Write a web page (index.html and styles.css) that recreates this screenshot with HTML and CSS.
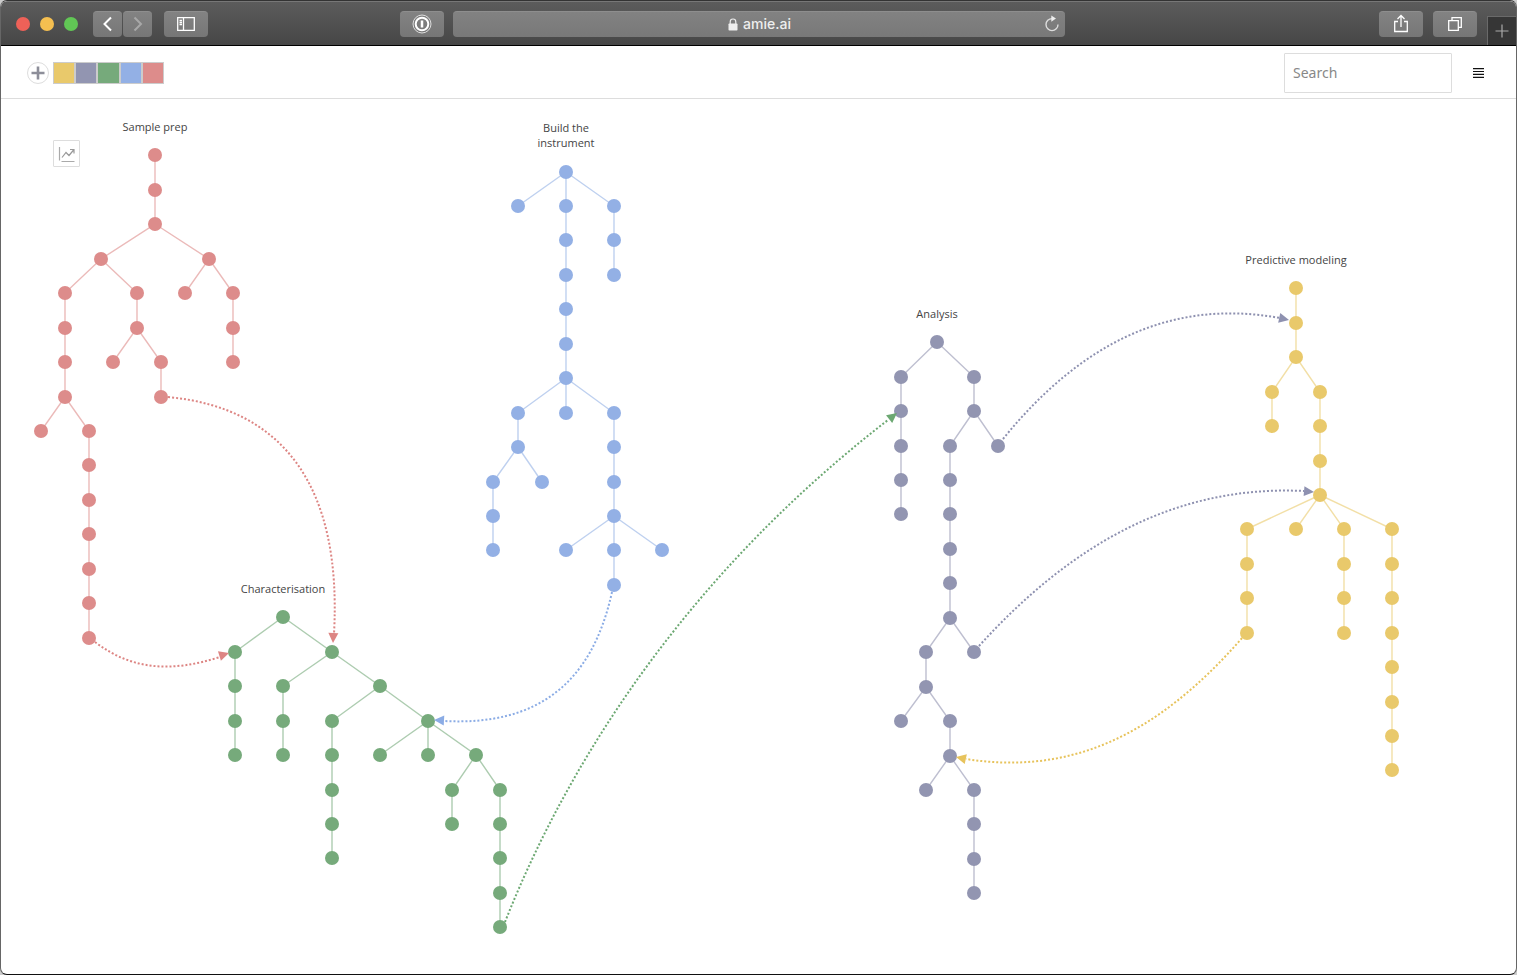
FILE: index.html
```html
<!DOCTYPE html>
<html lang="en">
<head>
<meta charset="utf-8">
<meta name="viewport" content="width=device-width, initial-scale=1">
<title>amie.ai</title>
<link rel="stylesheet" href="styles.css">
</head>
<body>
<div class="window">
  <header class="chrome">
    <div class="chrome-left">
      <div class="lights">
        <button class="light red" aria-label="Close"></button>
        <button class="light amber" aria-label="Minimise"></button>
        <button class="light green" aria-label="Zoom"></button>
      </div>
      <div class="history">
        <button class="tool narrow" aria-label="Back"><svg width="30" height="26" fill="none" stroke="#fff" stroke-width="2"><path d="M18 6.500L11.500 13l6.500 6.500"/></svg></button>
        <button class="tool narrow" aria-label="Forward"><svg width="30" height="26" fill="none" stroke="#a8a8a8" stroke-width="2"><path d="M11.500 6.500L18 13l-6.500 6.500"/></svg></button>
      </div>
      <button class="tool" aria-label="Sidebar"><svg width="44" height="26" fill="none" stroke="#fff" stroke-width="1.300"><path d="M13.700 6.700h16.600v12.600H13.700zM19.500 6.700v12.600M15.500 9.500h2.500M15.500 11.500h2.500M15.500 13.500h2.500"/></svg></button>
      <button class="tool password" aria-label="Password manager"><svg width="44" height="26" fill="none"><circle cx="22" cy="13" r="9" stroke="#ddd" stroke-width="1"/><circle cx="22" cy="13" r="6.300" stroke="#fff" stroke-width="2"/><path d="M22 9.500v7" stroke="#fff" stroke-width="2.500"/></svg></button>
    </div>
    <div class="address">
      <a class="site" href="#"><svg width="10" height="13" viewBox="0 0 10 13"><path d="M2.200 6V3.800a2.800 2.800 0 0 1 5.600 0V6" fill="none" stroke="#eee" stroke-width="1.200"/><rect x="0.500" y="5.500" width="9" height="7" rx="0.800" fill="#eee"/></svg>amie.ai</a>
      <button class="reload" aria-label="Reload"><svg width="16" height="18" viewBox="0 0 16 18"><path d="M8 3.600A6 6 0 1 0 14 9.600" fill="none" stroke="#ddd" stroke-width="1.400"/><path d="M7.300 0.500v6.200L12 3.600z" fill="#eee"/></svg></button>
    </div>
    <div class="chrome-right">
      <button class="tool" aria-label="Share"><svg width="44" height="26" fill="none" stroke="#fff" stroke-width="1.300"><path d="M19 10.500h-3.300v10h12.600v-10H25M22 16V4.500M18.500 8L22 4.500 25.500 8"/></svg></button>
      <button class="tool" aria-label="Show tabs"><svg width="44" height="26" fill="none" stroke="#fff" stroke-width="1.300"><path d="M15.700 9.700h9.600v9.600h-9.600zM19 9.500V6.700h9.300v9.600h-2.800"/></svg></button>
      <button class="new-tab" aria-label="New tab"><svg width="14" height="14" stroke="#aaa" stroke-width="1.200"><path d="M7 0.500v13M0.500 7h13"/></svg></button>
    </div>
  </header>
  <div class="app-bar">
    <button class="add" aria-label="Add tree"><svg width="14" height="14" stroke="#8d8e99" stroke-width="2.600"><path d="M7 0.500v13M0.500 7h13"/></svg></button>
    <div class="swatches">
      <button class="swatch yellow" aria-label="Yellow"></button>
      <button class="swatch purple" aria-label="Purple"></button>
      <button class="swatch green" aria-label="Green"></button>
      <button class="swatch blue" aria-label="Blue"></button>
      <button class="swatch rose" aria-label="Rose"></button>
    </div>
    <input class="search" type="search" placeholder="Search" aria-label="Search">
    <button class="menu" aria-label="Menu"><svg width="11" height="10" fill="#111"><path d="M0 0h11v1.200H0zM0 2.900h11v1.200H0zM0 5.800h11V7H0zM0 8.700h11v1.200H0z"/></svg></button>
  </div>
  <main class="canvas">
    <svg class="graph" id="graph" viewBox="1 99 1515 870" preserveAspectRatio="xMinYMin meet" role="img" aria-label="Project trees"></svg>
    <button class="chart" aria-label="Chart"><svg width="18" height="18" fill="none" stroke="#999" stroke-width="1.200"><path d="M1.500 2v13.500M3.500 16.500h13" stroke="#aaa"/><path d="M4 12.500l4-5 3 3 5-6M12 4.500h4v4"/></svg></button>
  </main>
</div>
<script src="graph.js"></script>
</body>
</html>
```
FILE: styles.css
```css
* { box-sizing: border-box; }

body {
  margin: 0;
  background: #ccc;
  font-family: "Open Sans", "Noto Sans", sans-serif;
}

button {
  margin: 0;
  padding: 0;
  border: 0;
  background: none;
  display: flex;
  align-items: center;
  justify-content: center;
  flex-shrink: 0;
}

svg { display: block; }

.window {
  display: flex;
  flex-direction: column;
  height: 100vh;
  overflow: hidden;
  border-radius: 7px;
  background: #fff;
  border: 1px solid #666;
  border-top-color: #333;
  border-bottom-color: #111;
}

.chrome {
  display: grid;
  grid-template-columns: 1fr minmax(200px, 612px) 1fr;
  align-items: center;
  height: 45px;
  flex-shrink: 0;
  background: linear-gradient(#5c5c5c, #464646);
  border-top: 1px solid #777;
  border-bottom: 1px solid #000;
}

.chrome-left,
.chrome-right {
  display: flex;
  align-items: center;
  gap: 10px;
}

.chrome-left { padding: 0 9px 0 15px; gap: 12px; }
.chrome-right { justify-content: flex-end; align-self: stretch; }

.lights { display: flex; gap: 10px; margin-right: 3px; }
.light { width: 14px; height: 14px; border-radius: 50%; }
.light.red { background: #ee6158; }
.light.amber { background: #f5bf50; }
.light.green { background: #61c755; }

.history { display: flex; gap: 1px; }

.tool {
  width: 44px;
  height: 26px;
  border-radius: 4px;
  background: linear-gradient(#838383, #767676);
  border-top: 1px solid #8e8e8e;
}

.tool.narrow { width: 29px; }
.password { margin-left: auto; }

.address {
  display: flex;
  align-items: center;
  height: 26px;
  padding: 0 5px 0 23px;
  border-radius: 4px;
  background: linear-gradient(#828282, #787878);
  border-top: 1px solid #8e8e8e;
}

.site {
  flex: 1;
  display: flex;
  align-items: center;
  justify-content: center;
  gap: 5px;
  color: #eee;
  font: 500 14px/18px Inter, sans-serif;
  text-decoration: none;
}

.new-tab {
  width: 29px;
  align-self: flex-end;
  height: 29px;
  background: #363636;
  border-top: 1px solid #6a6a6a;
  border-left: 1px solid #6a6a6a;
}

.app-bar {
  display: flex;
  align-items: center;
  flex-shrink: 0;
  height: 53px;
  padding: 1px 32px 0 26px;
  border-bottom: 1px solid #ddd;
}

.add {
  width: 22px;
  height: 22px;
  border: 1px solid #ddd;
  border-radius: 50%;
  margin-right: 4px;
}

.swatches { display: flex; width: 111px; }
.swatch { flex: 1; height: 22px; border: 1px solid #ccc; }
.swatch.yellow { background: #e9c96b; }
.swatch.purple { background: #9295b1; }
.swatch.green { background: #76aa7b; }
.swatch.blue { background: #93b0e5; }
.swatch.rose { background: #dd8c8b; }

.search {
  width: 168px;
  height: 40px;
  margin: 0 21px 0 auto;
  padding: 0 8px;
  border: 1px solid #ddd;
  border-radius: 1px;
  background: #fff;
  color: #333;
  font: 14px/20px "Noto Sans", "Open Sans", sans-serif;
}

.search::placeholder { color: #888; opacity: 1; }

.canvas {
  position: relative;
  flex: 1;
  min-height: 0;
}

.graph { width: 100%; height: 100%; }

.graph text {
  font: 11px "Open Sans", "Noto Sans", sans-serif;
  fill: #444;
  text-anchor: middle;
}

.link { fill: none; stroke-opacity: 0.6; stroke-width: 1.400px; }
.flow { fill: none; stroke-width: 2px; stroke-dasharray: 2 2; }

.chart {
  position: absolute;
  left: 52px;
  top: 41px;
  width: 27px;
  height: 27px;
  border: 1px solid #ddd;
  border-radius: 1px;
}
```
FILE: graph.js
```js
// Each branch is a chain of x,y nodes; a chain starts at its parent node.
const trees = [
  { color: "#dd8c8b", title: [["Sample prep", 155, 131]], branches: [
    "155,155 155,190 155,224 101,259 65,293 65,328 65,362 65,397 41,431",
    "65,397 89,431 89,465 89,500 89,534 89,569 89,603 89,638",
    "101,259 137,293 137,328 113,362", "137,328 161,362 161,397",
    "155,224 209,259 185,293", "209,259 233,293 233,328 233,362"] },
  { color: "#93b0e5", title: [["Build the", 566, 132], ["instrument", 566, 147]], branches: [
    "566,172 518,206", "566,172 566,206 566,240 566,275 566,309 566,344 566,378 566,413",
    "566,172 614,206 614,240 614,275",
    "566,378 518,413 518,447 493,482 493,516 493,550", "518,447 542,482",
    "566,378 614,413 614,447 614,482 614,516 614,550 614,585",
    "614,516 566,550", "614,516 662,550"] },
  { color: "#76aa7b", title: [["Characterisation", 283, 593]], branches: [
    "283,617 235,652 235,686 235,721 235,755", "283,617 332,652 283,686 283,721 283,755",
    "332,652 380,686 332,721 332,755 332,790 332,824 332,858",
    "380,686 428,721 380,755", "428,721 428,755",
    "428,721 476,755 452,790 452,824", "476,755 500,790 500,824 500,858 500,893 500,927"] },
  { color: "#9295b1", title: [["Analysis", 937, 318]], branches: [
    "937,342 901,377 901,411 901,446 901,480 901,514",
    "937,342 974,377 974,411 998,446",
    "974,411 950,446 950,480 950,514 950,549 950,583 950,618 974,652",
    "950,618 926,652 926,687 901,721", "926,687 950,721 950,756 926,790",
    "950,756 974,790 974,824 974,859 974,893"] },
  { color: "#e9c96b", title: [["Predictive modeling", 1296, 264]], branches: [
    "1296,288 1296,323 1296,357 1272,392 1272,426",
    "1296,357 1320,392 1320,426 1320,461 1320,495",
    "1320,495 1247,529 1247,564 1247,598 1247,633", "1320,495 1296,529",
    "1320,495 1344,529 1344,564 1344,598 1344,633",
    "1320,495 1392,529 1392,564 1392,598 1392,633 1392,667 1392,702 1392,736 1392,770"] }
];

// Dotted curves between trees; the arrow tip sits at [x, y] turned by an angle.
const flows = [
  { color: "#dd8583", d: "M168 397C285 408 342 488 334 634", tip: [333, 643, 92] },
  { color: "#dd8583", d: "M95 642C133 671 173 672 220 657", tip: [229, 653, -17] },
  { color: "#8bacE5", d: "M612 592C592 683 538 726 444 721", tip: [434, 720, 183] },
  { color: "#6ca872", d: "M505 922C575 745 700 565 888 420", tip: [897, 413, -38] },
  { color: "#8e91b0", d: "M1003 439C1080 344 1170 298 1280 318", tip: [1289, 320, 12] },
  { color: "#8e91b0", d: "M979 646C1075 540 1180 485 1304 491", tip: [1314, 492, 5] },
  { color: "#e7c35c", d: "M1242 638C1155 738 1068 775 966 759", tip: [956, 757, 192] }
];

const NS = "http://www.w3.org/2000/svg";
const graph = document.getElementById("graph");

function add(name, attrs, text) {
  const el = document.createElementNS(NS, name);
  for (const key in attrs) el.setAttribute(key, attrs[key]);
  if (text) el.textContent = text;
  graph.appendChild(el);
}

for (const tree of trees) {
  const nodes = new Set();
  for (const branch of tree.branches) {
    add("polyline", { class: "link", points: branch, stroke: tree.color });
    branch.split(" ").forEach(p => nodes.add(p));
  }
  for (const node of nodes) {
    const [cx, cy] = node.split(",");
    add("circle", { cx, cy, r: 7, fill: tree.color });
  }
  for (const [text, x, y] of tree.title) add("text", { x, y }, text);
}

for (const flow of flows) {
  const [x, y, angle] = flow.tip;
  add("path", { class: "flow", d: flow.d, stroke: flow.color });
  add("path", { d: "M0 0L-10 -5V5Z", fill: flow.color, transform: `translate(${x} ${y}) rotate(${angle})` });
}
```
